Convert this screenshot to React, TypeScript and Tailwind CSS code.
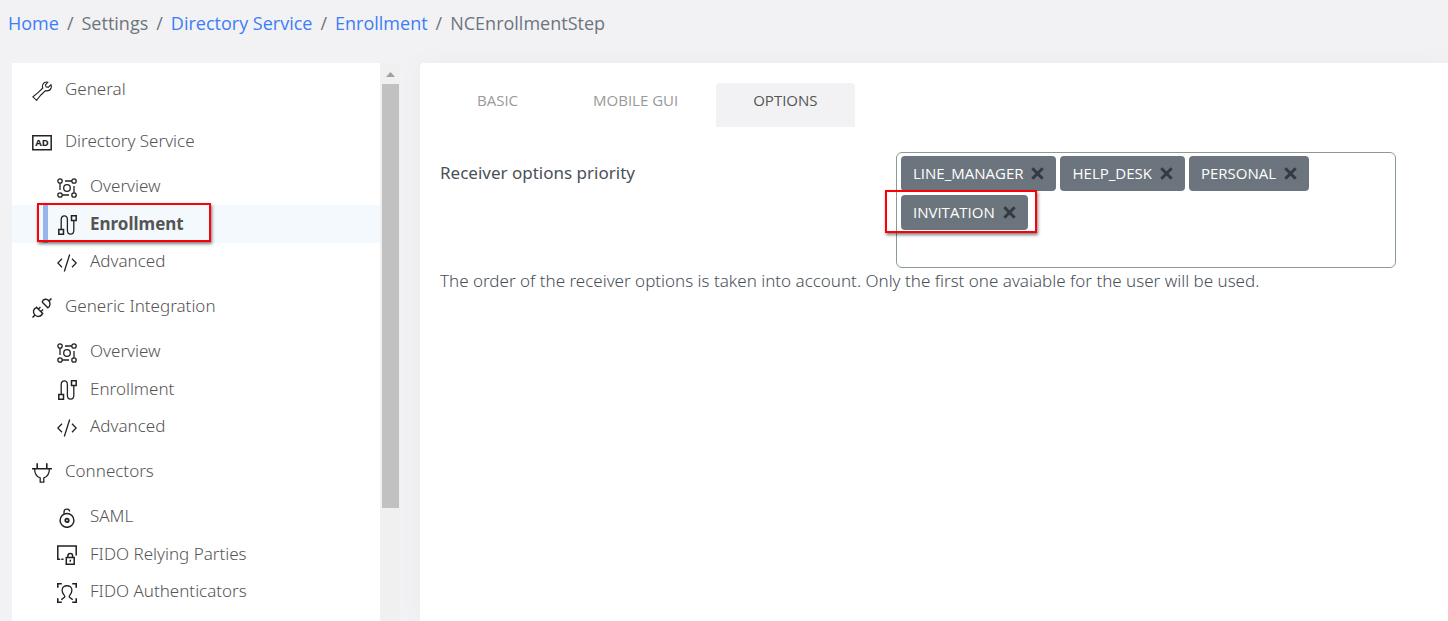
import { useState } from "react";
import type { ReactNode } from "react";

type IconName =
  | "wrench"
  | "ad"
  | "overview"
  | "enrollment"
  | "code"
  | "integration"
  | "plug"
  | "lock"
  | "relying"
  | "authenticator";

type NavGroup = {
  label: string;
  icon: IconName;
  items: { label: string; icon: IconName; active?: boolean }[];
};

const directoryItems: NavGroup["items"] = [
  { label: "Overview", icon: "overview" },
  { label: "Enrollment", icon: "enrollment" },
  { label: "Advanced", icon: "code" },
];

const groups: NavGroup[] = [
  { label: "General", icon: "wrench", items: [] },
  {
    label: "Directory Service",
    icon: "ad",
    items: directoryItems.map((item) => ({
      ...item,
      active: item.label === "Enrollment",
    })),
  },
  { label: "Generic Integration", icon: "integration", items: directoryItems },
  {
    label: "Connectors",
    icon: "plug",
    items: [
      { label: "SAML", icon: "lock" },
      { label: "FIDO Relying Parties", icon: "relying" },
      { label: "FIDO Authenticators", icon: "authenticator" },
    ],
  },
];

const crumbs = [
  { label: "Home", link: true },
  { label: "Settings", link: false },
  { label: "Directory Service", link: true },
  { label: "Enrollment", link: true },
  { label: "NCEnrollmentStep", link: false },
];

const tabs = ["BASIC", "MOBILE GUI", "OPTIONS"];

const icons: Record<IconName, ReactNode> = {
  wrench: (
    <path
      d="M15.8 1.2c-2.2-.6-4.6.7-5.2 2.9-.3 1-.2 2 .2 2.9L6.3 11.4.9 15.8l3.700 3.500 4.300-5.300 4.700-4.400c2.200.6 4.600-.3 5.500-2.600.3-1 .3-2.200-.1-3.200l-2.900 2.600-2-.5-.7-2z"
      strokeWidth="1.1"
    />
  ),
  ad: (
    <>
      <path d="M.8 2.800h18.400v14H.8z" strokeWidth="1.5" />
      <text
        x="10"
        y="13.200"
        textAnchor="middle"
        fontSize="9.500"
        fontWeight="700"
        fill="currentColor"
        stroke="none"
      >
        AD
      </text>
    </>
  ),
  overview: (
    <>
      <circle cx="3" cy="3" r="2.2" />
      <circle cx="17" cy="3" r="2.2" />
      <circle cx="3" cy="17" r="2.2" />
      <circle cx="17" cy="17" r="2.2" />
      <circle cx="10" cy="10" r="3.3" />
      <path d="M8 3h6.800M12 17H5.200M3 5.200V12M17 14.800V8" />
    </>
  ),
  enrollment: (
    <>
      <path d="M1.800 14.500h4.700v4.700H1.800zM14.500.8h4.700v4.700h-4.700z" strokeWidth="1.5" />
      <path d="M4.200 14.500V4.800c0-5.300 6.200-5.300 6.200 0v10.400c0 5.300 6.400 5.300 6.400 0V5.500" />
    </>
  ),
  code: <path d="M5 5.800.8 10 5 14.200M15 5.800l4.200 4.200-4.200 4.200M12.700 1.500l-5.400 17" />,
  integration: (
    <>
      <path d="m.5 19.500 2.500-2.500M16.700 3.300 19.500.5" strokeWidth="1.5" />
      <path
        d="m4 8.800 7.200 7.200M4.700 9.500C.9 10.600.7 14.600 2.800 16.900s6.500 2.300 7.700-1.600M6.300 11.100l2.200-2.200M8.900 13.700l2.200-2.200M9.800 3.700l6.500 6.500M10.200 4.100c.8-3.300 4.500-3.700 6.500-1.600s1.700 6.300-.9 7.200"
        strokeWidth="1.4"
      />
    </>
  ),
  plug: (
    <>
      <path d="M0 5.700h20M5.200.2v5.500M14.800.2v5.500" strokeWidth="1.6" />
      <path d="M2.600 5.700c0 5.200 2 8 5.600 9.200v4.300h3.600v-4.300c3.600-1.200 5.600-4 5.600-9.200" />
    </>
  ),
  lock: (
    <>
      <circle cx="10" cy="12.400" r="6.900" strokeWidth="1.5" />
      <circle cx="10" cy="12.400" r="1.700" strokeWidth="1.8" />
      <path d="M7 5.800V4c0-3.600 5.300-3.700 5.700-.5" />
    </>
  ),
  relying: (
    <>
      <path d="M6.500 14.300H4.300M3.200 14.300H.8V1h18.400v9.500" strokeWidth="1.5" />
      <path d="M9.300 12.500h7.900v6.700H9.300zM10.900 12.500v-1.800c0-2.900 4.700-2.900 4.700 0v1.800M13.300 14.800v2" strokeWidth="1.5" />
    </>
  ),
  authenticator: (
    <>
      <path d="M.8 4.800v-4h4M15.200.8h4v4M19.200 15.200v4h-4M4.800 19.200h-4v-4" strokeWidth="1.6" />
      <path d="M4.500 17c.5-2.200 3.300-1.700 3.300-3.600 0-1.200-2.700-2.700-2.700-6.100 0-6.100 9.800-6.100 9.800 0 0 3.400-2.700 4.900-2.700 6.100 0 1.900 2.800 1.400 3.300 3.600" />
    </>
  ),
};

function Icon({ name }: { name: IconName }) {
  return (
    <svg
      viewBox="0 0 20 20"
      className="mt-1 size-5 shrink-0 text-[#222222]"
      fill="none"
      stroke="currentColor"
      strokeWidth="1.3"
      aria-hidden="true"
    >
      {icons[name]}
    </svg>
  );
}

function Breadcrumb() {
  return (
    <nav aria-label="Breadcrumb" className="px-2 pt-2.5 pb-[26px]">
      <ol className="flex text-lg leading-[27px] text-[#6c757d]">
        {crumbs.map(({ label, link }, i) => (
          <li key={label} className="flex">
            {i > 0 && <span className="px-2">/</span>}
            {link ? (
              <a href="#" className="text-[#3d7df6]">
                {label}
              </a>
            ) : (
              <span>{label}</span>
            )}
          </li>
        ))}
      </ol>
    </nav>
  );
}

function Sidebar() {
  return (
    <aside className="flex w-[388px] shrink-0">
      <nav
        aria-label="Settings"
        className="flex-1 bg-white font-['Noto_Sans',sans-serif] text-[17px] font-light text-[#555555]"
      >
        {groups.map(({ label, icon, items }) => (
          <div key={label}>
            <a
              href="#"
              className={`flex items-center gap-[13px] px-5 pb-px ${items.length ? "h-[53px]" : "h-[52px]"}`}
            >
              <Icon name={icon} />
              {label}
            </a>
            {items.length > 0 && (
              <ul className="flex h-28 flex-col">
                {items.map((item) => (
                  <li key={item.label} className="relative flex-1">
                    <a
                      href="#"
                      className={`flex h-full items-center gap-[13px] pb-px pl-[45px] ${
                        item.active ? "bg-[#f3f9fd] font-bold" : ""
                      }`}
                    >
                      <Icon name={item.icon} />
                      {item.label}
                    </a>
                    {item.active && (
                      <>
                        <span className="absolute inset-y-0 left-[31px] w-[5px] bg-[#97b5e8]" />
                        <span className="absolute -top-0.5 left-[25px] h-[39px] w-[174px] border-2 border-[#fb0007] shadow-[1px_2px_3px_rgba(0,0,0,0.5)]" />
                      </>
                    )}
                  </li>
                ))}
              </ul>
            )}
          </div>
        ))}
      </nav>
      <div className="flex w-5 flex-col items-center bg-[#f0f0f0]">
        <svg viewBox="0 0 9 5" className="mt-[9px] mb-[7px] h-[5px] w-[9px]" aria-hidden="true">
          <path d="M0 5 4.500 0 9 5z" fill="#a0a0a0" />
        </svg>
        <div className="h-[424px] w-[17px] bg-[#c1c1c1]" />
      </div>
    </aside>
  );
}

type ReceiverTagProps = {
  label: string;
  marked: boolean;
  onRemove: () => void;
};

function ReceiverTag({ label, marked, onRemove }: ReceiverTagProps) {
  return (
    <li className="relative flex h-[35px] items-center gap-2 rounded bg-[#6c757d] px-3 text-[15px] text-white">
      {label}
      <button type="button" aria-label={`Remove ${label}`} onClick={onRemove} className="text-[#343a40]">
        <svg viewBox="0 0 13 13" className="size-[13px]" stroke="currentColor" strokeWidth="3">
          <path d="m1.300 1.300 10.400 10.400M11.700 1.300 1.300 11.700" />
        </svg>
      </button>
      {marked && (
        <span className="pointer-events-none absolute -top-[5px] -right-[9px] -bottom-[3px] -left-4 border-2 border-[#fb0007] shadow-[1px_2px_3px_rgba(0,0,0,0.5)]" />
      )}
    </li>
  );
}

export default function App() {
  const [tab, setTab] = useState("OPTIONS");
  const [options, setOptions] = useState(["LINE_MANAGER", "HELP_DESK", "PERSONAL", "INVITATION"]);

  return (
    <div className="flex h-screen flex-col overflow-hidden bg-[#f2f2f4] font-['Open_Sans','Noto_Sans',sans-serif]">
      <Breadcrumb />
      <div className="flex min-h-0 flex-1 gap-5 pl-3">
        <Sidebar />
        <main className="min-w-0 flex-1 rounded-tl bg-white pt-5 pr-[52px] pl-5 shadow-[0_0_30px_rgba(0,0,0,0.03)]">
          <div role="tablist" className="flex gap-px">
            {tabs.map((name) => (
              <button
                key={name}
                type="button"
                role="tab"
                aria-selected={tab === name}
                onClick={() => setTab(name)}
                className={`h-11 rounded-t px-[37px] pb-2.5 text-[15px] ${
                  tab === name ? "bg-[#f2f2f4] text-[#555555]" : "text-[#999999]"
                }`}
              >
                {name}
              </button>
            ))}
          </div>
          <div className="mt-[25px] flex">
            <h2
              id="receiver-label"
              className="w-[456px] shrink-0 pt-2 font-['Noto_Sans',sans-serif] text-[17px] leading-[26px] text-[#495057]"
            >
              Receiver options priority
            </h2>
            <ul
              aria-labelledby="receiver-label"
              className="flex h-[116px] min-w-0 flex-1 flex-wrap content-start gap-1 rounded-md border border-[#8a9a98] px-1 py-[3px]"
            >
              {options.map((option) => (
                <ReceiverTag
                  key={option}
                  label={option}
                  marked={option === "INVITATION"}
                  onRemove={() => setOptions(options.filter((o) => o !== option))}
                />
              ))}
            </ul>
          </div>
          <p className="font-['Noto_Sans',sans-serif] text-[17px] leading-[26px] font-light text-[#495057]">
            The order of the receiver options is taken into account. Only the first one avaiable for the user will be
            used.
          </p>
        </main>
      </div>
    </div>
  );
}
